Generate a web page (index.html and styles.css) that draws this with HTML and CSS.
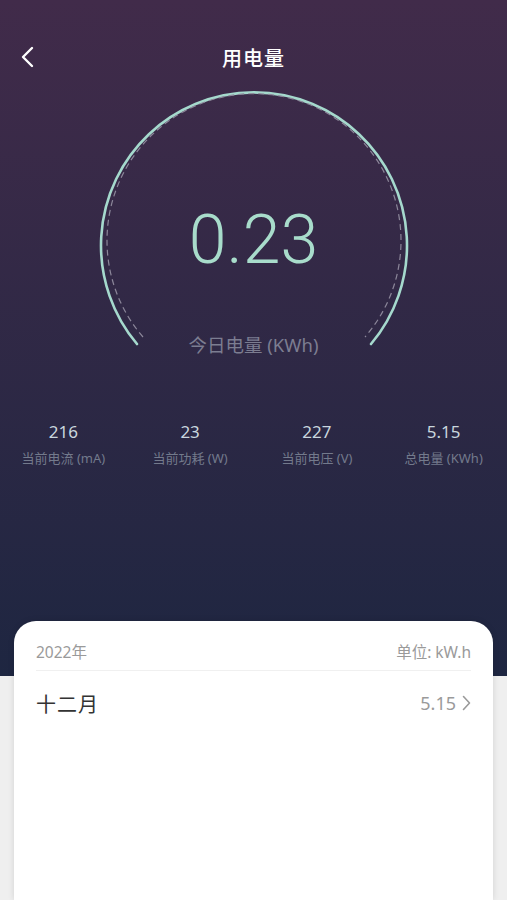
FILE: index.html
```html
<!DOCTYPE html>
<html lang="zh-CN">
  <head>
    <meta charset="UTF-8" />
    <meta name="viewport" content="width=device-width, initial-scale=1.0" />
    <title>用电量</title>
    <link rel="stylesheet" href="styles.css">
  </head>
  <body>
    <div id="page">
      <div class="nav-bar">
        <button class="back-btn" aria-label="back">
          <svg width="14" height="22" viewBox="0 0 14 22">
            <path d="M12 2 L3 11 L12 20" fill="none" stroke="#fff" stroke-width="2.4" stroke-linecap="round" stroke-linejoin="round" />
          </svg>
        </button>
        <h1 class="nav-title">用电量</h1>
      </div>

      <div class="gauge">
        <svg class="gauge-arc" width="320" height="280" viewBox="0 0 320 280">
          <!-- outer ring, open at the bottom -->
          <path d="M43 259 A153 153 0 1 1 277 259" fill="none" stroke="#a5d9cd" stroke-width="2.6" stroke-linecap="round" />
          <!-- inner dashed ring -->
          <path d="M49 252 A147 147 0 1 1 271 252" fill="none" stroke="#8c879a" stroke-width="1.2" stroke-dasharray="6 4" />
        </svg>
        <div class="gauge-value">0.23</div>
        <div class="gauge-label">今日电量 (KWh)</div>
      </div>

      <div class="stats">
        <div class="stat">
          <span class="stat-value">216</span>
          <span class="stat-label">当前电流 (mA)</span>
        </div>
        <div class="stat">
          <span class="stat-value">23</span>
          <span class="stat-label">当前功耗 (W)</span>
        </div>
        <div class="stat">
          <span class="stat-value">227</span>
          <span class="stat-label">当前电压 (V)</span>
        </div>
        <div class="stat">
          <span class="stat-value">5.15</span>
          <span class="stat-label">总电量 (KWh)</span>
        </div>
      </div>

      <div class="history-card">
        <div class="card-head">
          <span>2022年</span>
          <span>单位: kW.h</span>
        </div>
        <div class="month-row">
          <span class="month-name">十二月</span>
          <span class="month-value">
            5.15
            <svg width="9" height="16" viewBox="0 0 9 16">
              <path d="M1.5 1.5 L7.5 8 L1.5 14.5" fill="none" stroke="#9a9a9a" stroke-width="1.6" stroke-linecap="round" stroke-linejoin="round" />
            </svg>
          </span>
        </div>
      </div>
    </div>
  </body>
</html>
```

FILE: styles.css
```css
* {
  margin: 0;
  padding: 0;
  box-sizing: border-box;
}
html,
body {
  width: 100%;
  height: 100%;
}
body {
  background: linear-gradient(to bottom, #412b4a 0, #1e2641 676px, #efefef 676px);
  font-family: "Noto Sans", "Noto Sans CJK SC", sans-serif;
  overflow: hidden;
}
#page {
  display: flex;
  flex-direction: column;
  height: 100%;
}

.nav-bar {
  height: 44px;
  margin-top: 35px;
  display: flex;
  align-items: center;
  justify-content: center;
  position: relative;
}
.back-btn {
  position: absolute;
  left: 20px;
  top: 11px;
  background: none;
  border: none;
  display: flex;
}
.nav-title {
  color: #fff;
  font-size: 20px;
  font-weight: 500;
  letter-spacing: 1px;
}

.gauge {
  position: relative;
  width: 320px;
  height: 280px;
  margin: 6px auto 0;
  display: flex;
  flex-direction: column;
  align-items: center;
}
.gauge-arc {
  position: absolute;
  top: 0;
  left: 0;
}
.gauge-value {
  margin-top: 115px;
  color: #a8dccb;
  font-family: "Roboto", "Noto Sans", sans-serif;
  font-weight: 300;
  font-size: 68px;
  line-height: 80px;
}
.gauge-label {
  margin-top: 53px;
  color: #7c7d91;
  font-size: 18.5px;
  line-height: 24px;
}

.stats {
  display: grid;
  grid-template-columns: repeat(4, 1fr);
  margin-top: 55px;
}
.stat {
  display: flex;
  flex-direction: column;
  align-items: center;
}
.stat-value {
  color: #c9d6de;
  font-size: 17px;
  line-height: 24px;
}
.stat-label {
  margin-top: 5px;
  color: #737a8c;
  font-size: 13px;
  line-height: 18px;
}

.history-card {
  flex: 1;
  margin: 154px 14px 0;
  background: #fff;
  border-radius: 22px 22px 0 0;
  box-shadow: 0 0 6px rgba(0, 0, 0, 0.12);
  padding: 0 22px;
}
.card-head {
  display: flex;
  justify-content: space-between;
  align-items: center;
  height: 50px;
  padding-top: 12px;
  border-bottom: 1px solid #f0f0f0;
  color: #9a9a9a;
  font-size: 15.5px;
}
.month-row {
  display: flex;
  justify-content: space-between;
  align-items: center;
  height: 64px;
}
.month-name {
  color: #333;
  font-size: 20px;
  letter-spacing: 1px;
}
.month-value {
  display: flex;
  align-items: center;
  gap: 6px;
  color: #9a9a9a;
  font-size: 18px;
}
```
